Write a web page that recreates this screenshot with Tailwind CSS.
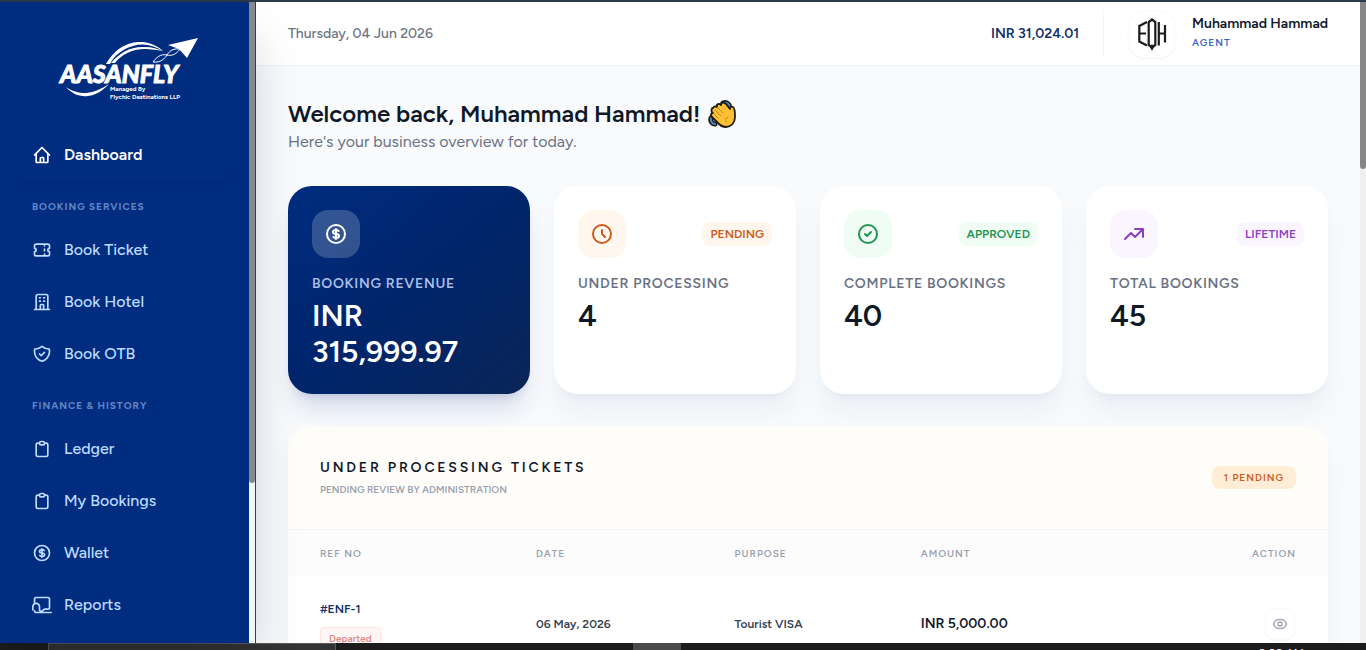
<!DOCTYPE html>
<html lang="en">
<head>
    <meta charset="UTF-8" />
    <meta name="viewport" content="width=device-width, initial-scale=1.0">
    <title>Aasanfly - Agent Dashboard</title>
    <script src="https://cdn.jsdelivr.net/npm/@tailwindcss/browser@4"></script>
</head>
<body class="flex h-screen flex-col overflow-hidden bg-[#f8fafc] font-['Figtree','Inter',sans-serif] antialiased">

    <div class="h-[2px] shrink-0 bg-[#2b3a4a]"></div>

    <div class="flex min-h-0 flex-1">

        <!-- Sidebar -->
        <aside class="relative z-10 flex w-64 shrink-0 overflow-hidden border-r border-[#1f3f80] bg-[#002d80] shadow-2xl">
            <div class="min-w-0 flex-1 overflow-hidden">
                <a href="#" class="mx-auto mt-8 mb-7 block w-[148px]" aria-label="Aasanfly home">
                    <svg viewBox="-8 0 148 69" class="block w-full" fill="#fff">
                        <path d="M47 30C57 12 72 7 84 8c9 1 16 5 20 9-10-6-20-8-30-5C63 15 55 22 51 30z" />
                        <path d="M52 29C60 19 72 12 86 13c7 0 13 2 18 4-6-1-12-2-18-2-13 0-24 6-30 14z" />
                        <path d="M139 4l-30 7 11 4 8 9z" />
                        <path d="M121 15c-8-1-11 3-13 6s-6 8-14 7c5-7 10-8 14-7s9 0 13-6z" fill="none" stroke="#fff" stroke-width="1" />
                        <path d="M7 53c6 7 14 10 22 9 9-1 15-6 21-12-8 5-14 8-23 9-8 0-14-2-20-6z" />
                        <text x="1" y="49" font-family="Lato, sans-serif" font-size="25" font-weight="900" font-style="italic" stroke="#fff" stroke-width="0.9">AASANFLY</text>
                        <text x="51" y="57" font-family="Figtree, sans-serif" font-size="6.25" font-weight="700">Managed By</text>
                        <text x="51" y="65" font-family="Figtree, sans-serif" font-size="6.25" font-weight="700">Flychic Destinations LLP</text>
                    </svg>
                </a>

                <nav class="px-4 text-base font-medium text-[#bfdbfe]">
                    <a href="#" class="flex h-12 items-center gap-3 rounded-xl px-4 font-semibold text-white shadow-lg shadow-[#001f5c]/10">
                        <svg class="size-5" viewBox="0 0 24 24" fill="none" stroke="currentColor" stroke-width="2" stroke-linecap="round" stroke-linejoin="round"><path d="M3 12l2-2m0 0l7-7 7 7M5 10v10a1 1 0 001 1h3m10-11l2 2m-2-2v10a1 1 0 01-1 1h-3m-6 0a1 1 0 001-1v-4a1 1 0 011-1h2a1 1 0 011 1v4a1 1 0 001 1m-6 0h6" /></svg>
                        Dashboard
                    </a>

                    <p class="px-4 pt-5 pb-3 text-[10px] leading-[15px] font-bold tracking-widest text-[#6486c8]">BOOKING SERVICES</p>
                    <div class="space-y-1">
                        <a href="#" class="flex h-12 items-center gap-3 px-4">
                            <svg class="size-5" viewBox="0 0 24 24" fill="none" stroke="currentColor" stroke-width="2" stroke-linecap="round" stroke-linejoin="round"><path d="M15 5v2m0 4v2m0 4v2M5 5a2 2 0 00-2 2v3a2 2 0 110 4v3a2 2 0 002 2h14a2 2 0 002-2v-3a2 2 0 110-4V7a2 2 0 00-2-2H5z" /></svg>
                            Book Ticket
                        </a>
                        <a href="#" class="flex h-12 items-center gap-3 px-4">
                            <svg class="size-5" viewBox="0 0 24 24" fill="none" stroke="currentColor" stroke-width="2" stroke-linecap="round" stroke-linejoin="round"><path d="M19 21V5a2 2 0 00-2-2H7a2 2 0 00-2 2v16m14 0h2m-2 0h-5m-9 0H3m2 0h5M9 7h1m-1 4h1m4-4h1m-1 4h1m-5 10v-5a1 1 0 011-1h2a1 1 0 011 1v5m-4 0h4" /></svg>
                            Book Hotel
                        </a>
                        <a href="#" class="flex h-12 items-center gap-3 px-4">
                            <svg class="size-5" viewBox="0 0 24 24" fill="none" stroke="currentColor" stroke-width="2" stroke-linecap="round" stroke-linejoin="round"><path d="M9 12l2 2 4-4m5.618-4.016A11.955 11.955 0 0112 2.944a11.955 11.955 0 01-8.618 3.04A12.02 12.02 0 003 9c0 5.591 3.824 10.29 9 11.622 5.176-1.332 9-6.03 9-11.622 0-1.042-.133-2.052-.382-3.016z" /></svg>
                            Book OTB
                        </a>
                    </div>

                    <p class="px-4 pt-5 pb-3 text-[10px] leading-[15px] font-bold tracking-widest text-[#6486c8]">FINANCE &amp; HISTORY</p>
                    <div class="space-y-1">
                        <a href="#" class="flex h-12 items-center gap-3 px-4">
                            <svg class="size-5" viewBox="0 0 24 24" fill="none" stroke="currentColor" stroke-width="2" stroke-linecap="round" stroke-linejoin="round"><path d="M9 5H7a2 2 0 00-2 2v12a2 2 0 002 2h10a2 2 0 002-2V7a2 2 0 00-2-2h-2M9 5a2 2 0 002 2h2a2 2 0 002-2M9 5a2 2 0 012-2h2a2 2 0 012 2" /></svg>
                            Ledger
                        </a>
                        <a href="#" class="flex h-12 items-center gap-3 px-4">
                            <svg class="size-5" viewBox="0 0 24 24" fill="none" stroke="currentColor" stroke-width="2" stroke-linecap="round" stroke-linejoin="round"><path d="M9 5H7a2 2 0 00-2 2v12a2 2 0 002 2h10a2 2 0 002-2V7a2 2 0 00-2-2h-2M9 5a2 2 0 002 2h2a2 2 0 002-2M9 5a2 2 0 012-2h2a2 2 0 012 2" /></svg>
                            My Bookings
                        </a>
                        <a href="#" class="flex h-12 items-center gap-3 px-4">
                            <svg class="size-5" viewBox="0 0 24 24" fill="none" stroke="currentColor" stroke-width="2" stroke-linecap="round" stroke-linejoin="round"><path d="M12 8c-1.657 0-3 .895-3 2s1.343 2 3 2 3 .895 3 2-1.343 2-3 2m0-8c1.11 0 2.08.402 2.599 1M12 8V7m0 1v8m0 0v1m0-1c-1.11 0-2.08-.402-2.599-1M21 12a9 9 0 11-18 0 9 9 0 0118 0z" /></svg>
                            Wallet
                        </a>
                        <a href="#" class="flex h-12 items-center gap-3 px-4">
                            <svg class="size-5 overflow-visible" viewBox="0 0 24 24" fill="none" stroke="currentColor" stroke-width="2" stroke-linecap="round" stroke-linejoin="round"><path d="M3 10V5a2 2 0 012-2h14a2 2 0 012 2v10a2 2 0 01-2 2h-4l-5 4H5a2 2 0 01-2-2M1 18v-4a4 4 0 018 0v3q0 3 3 3M4 21h19" /></svg>
                            Reports
                        </a>
                    </div>
                </nav>
            </div>
            <div class="w-[6px] shrink-0 bg-[#f1f5fb]">
                <div class="h-3/4 rounded-b-sm bg-[#86898e]"></div>
            </div>
        </aside>

        <!-- Main -->
        <div class="flex min-w-0 flex-1 flex-col overflow-hidden">
            <header class="flex h-16 shrink-0 items-center justify-between border-b border-gray-100 bg-white px-8">
                <p class="text-sm font-medium text-gray-500">Thursday, 04 Jun 2026</p>
                <div class="flex items-center">
                    <p class="pr-6 text-sm font-semibold text-[#0f2f66]">INR 31,024.01</p>
                    <div class="flex items-center gap-4 border-l border-gray-100 pl-6">
                        <div class="flex size-12 items-center justify-center rounded-2xl border border-gray-50 shadow-xs">
                            <svg class="h-[34px] w-[30px]" viewBox="0 0 30 34" fill="none" stroke="#1c1c1c" stroke-width="2.2">
                                <path d="M10 5L2.300 9v15.500l7.700 4M3 16.500h6" />
                                <path d="M15 2.500l3.300 2.500v23L15 30.500 11.700 28V5z" />
                                <path d="M15 34l-2-4 2-3 2 3z" fill="#1c1c1c" stroke="none" />
                                <path d="M21.800 5v23.500M28 8v17.500M22 16.500h6" />
                            </svg>
                        </div>
                        <div class="pb-0.5">
                            <p class="text-sm leading-5 font-semibold text-gray-900">Muhammad Hammad</p>
                            <p class="text-[10px] leading-[18px] font-semibold tracking-widest text-[#3b63c0]">AGENT</p>
                        </div>
                    </div>
                </div>
            </header>

            <main class="min-h-0 flex-1 overflow-hidden p-8">
                <div class="mb-8">
                    <h1 class="flex items-center gap-2 text-2xl font-semibold text-gray-900">
                        Welcome back, Muhammad Hammad!
                        <svg class="size-7" viewBox="0 0 28 28" stroke="#1b1b1b" stroke-width="1.8" stroke-linejoin="round" stroke-linecap="round">
                            <path d="M15 3c3-1 6 0 7 4M3 18c-1 3 1 6 4 6" fill="none" stroke-width="5" />
                            <path d="M15 3c3-1 6 0 7 4M3 18c-1 3 1 6 4 6" fill="none" stroke="#4f86ad" stroke-width="2" />
                            <path d="M5 8c1-2 3-2 4-1-1-3 2-4 4-2 0-3 3-3 5-1l4 5c0-2 1-3 3-2 2 1 2 5 2 10 0 6-4 10-9 10-3 0-5-1-7-3l-7-7c-2-2-1-4 1-4-3-2-1-5 0-5z" fill="#ffc033" />
                            <path d="M9 7l6 6M5 13l5 5M7 10l6 6M20 17c-2 1-3 3-2 5" fill="none" stroke="#b8741a" stroke-width="0.8" />
                        </svg>
                    </h1>
                    <p class="text-base text-gray-500">Here's your business overview for today.</p>
                </div>

                <div class="mb-8 grid grid-cols-4 gap-6">
                    <div class="rounded-3xl bg-linear-to-br from-[#002d80] via-[#00256b] to-[#0a2558] p-6 shadow-xl shadow-blue-900/15">
                        <div class="flex size-12 items-center justify-center rounded-2xl bg-white/20 text-white">
                            <svg class="size-6" viewBox="0 0 24 24" fill="none" stroke="currentColor" stroke-width="2" stroke-linecap="round" stroke-linejoin="round"><path d="M12 8c-1.657 0-3 .895-3 2s1.343 2 3 2 3 .895 3 2-1.343 2-3 2m0-8c1.11 0 2.08.402 2.599 1M12 8V7m0 1v8m0 0v1m0-1c-1.11 0-2.08-.402-2.599-1M21 12a9 9 0 11-18 0 9 9 0 0118 0z" /></svg>
                        </div>
                        <p class="mt-4 mb-1 text-sm font-semibold tracking-wider text-[#a9bfe8]">BOOKING REVENUE</p>
                        <p class="text-3xl font-semibold text-white">INR 315,999.97</p>
                    </div>
                    <div class="rounded-3xl bg-white p-6 shadow-xl shadow-slate-300/30">
                        <div class="flex items-center justify-between">
                            <div class="flex size-12 items-center justify-center rounded-2xl bg-orange-50 text-[#cb5a1c]">
                                <svg class="size-6" viewBox="0 0 24 24" fill="none" stroke="currentColor" stroke-width="2" stroke-linecap="round" stroke-linejoin="round"><path d="M12 8v4l3 3m6-3a9 9 0 11-18 0 9 9 0 0118 0z" /></svg>
                            </div>
                            <span class="rounded-lg bg-orange-50 px-2 py-1 text-xs font-semibold text-[#cb5a1c]">PENDING</span>
                        </div>
                        <p class="mt-4 mb-1 text-sm font-semibold tracking-wider text-gray-500">UNDER PROCESSING</p>
                        <p class="text-3xl font-semibold text-gray-900">4</p>
                    </div>
                    <div class="rounded-3xl bg-white p-6 shadow-xl shadow-slate-300/30">
                        <div class="flex items-center justify-between">
                            <div class="flex size-12 items-center justify-center rounded-2xl bg-green-50 text-[#22924f]">
                                <svg class="size-6" viewBox="0 0 24 24" fill="none" stroke="currentColor" stroke-width="2" stroke-linecap="round" stroke-linejoin="round"><path d="M9 12l2 2 4-4m6 2a9 9 0 11-18 0 9 9 0 0118 0z" /></svg>
                            </div>
                            <span class="rounded-lg bg-green-50 px-2 py-1 text-xs font-semibold text-[#22924f]">APPROVED</span>
                        </div>
                        <p class="mt-4 mb-1 text-sm font-semibold tracking-wider text-gray-500">COMPLETE BOOKINGS</p>
                        <p class="text-3xl font-semibold text-gray-900">40</p>
                    </div>
                    <div class="rounded-3xl bg-white p-6 shadow-xl shadow-slate-300/30">
                        <div class="flex items-center justify-between">
                            <div class="flex size-12 items-center justify-center rounded-2xl bg-purple-50 text-[#8a3fc0]">
                                <svg class="size-6" viewBox="0 0 24 24" fill="none" stroke="currentColor" stroke-width="2" stroke-linecap="round" stroke-linejoin="round"><path d="M13 7h8m0 0v8m0-8l-8 8-4-4-6 6" /></svg>
                            </div>
                            <span class="rounded-lg bg-purple-50 px-2 py-1 text-xs font-semibold text-[#8a3fc0]">LIFETIME</span>
                        </div>
                        <p class="mt-4 mb-1 text-sm font-semibold tracking-wider text-gray-500">TOTAL BOOKINGS</p>
                        <p class="text-3xl font-semibold text-gray-900">45</p>
                    </div>
                </div>

                <section class="overflow-hidden rounded-3xl bg-white shadow-xl shadow-slate-300/30">
                    <div class="flex items-center justify-between border-b border-gray-100 bg-[#fffdf9] p-8">
                        <div>
                            <h2 class="mb-1 text-sm font-semibold tracking-[0.2em] text-gray-900">UNDER PROCESSING TICKETS</h2>
                            <p class="text-[10px] leading-[15px] font-semibold text-gray-400">PENDING REVIEW BY ADMINISTRATION</p>
                        </div>
                        <span class="rounded-lg bg-[#ffedd5] px-3 py-1 text-[10px] leading-[15px] font-semibold tracking-widest text-[#cb5a1c]">1 PENDING</span>
                    </div>
                    <table class="w-full table-fixed text-left">
                        <thead class="bg-[#fcfcfd] text-[10px] leading-[15px] tracking-widest text-gray-400">
                            <tr>
                                <th class="w-[22.3%] py-4 pl-8 font-semibold">REF NO</th>
                                <th class="w-[19.1%] py-4 pl-4 font-semibold">DATE</th>
                                <th class="w-[17.9%] py-4 pl-4 font-semibold">PURPOSE</th>
                                <th class="py-4 pl-4 font-semibold">AMOUNT</th>
                                <th class="w-[18%] py-4 pr-8 text-right font-semibold">ACTION</th>
                            </tr>
                        </thead>
                        <tbody>
                            <tr class="text-xs font-semibold text-gray-700">
                                <td class="py-5 pl-8">
                                    <p class="mb-1.5 leading-6 text-[#0f2f66]">#ENF-1</p>
                                    <span class="inline-block rounded-sm border border-red-100 bg-[#fef6f6] px-2 py-[3px] text-[10px] leading-[15px] font-semibold text-[#dc8a8a]">Departed</span>
                                </td>
                                <td class="py-5 pl-4">06 May, 2026</td>
                                <td class="py-5 pl-4">Tourist VISA</td>
                                <td class="py-5 pl-4 text-sm text-gray-900">INR 5,000.00</td>
                                <td class="py-5 pr-8 text-right">
                                    <button class="inline-flex size-8 items-center justify-center rounded-xl border border-gray-50 align-middle text-gray-400 shadow-xs" aria-label="View ticket">
                                        <svg class="size-4" viewBox="0 0 24 24" fill="none" stroke="currentColor" stroke-width="2" stroke-linecap="round" stroke-linejoin="round"><path d="M15 12a3 3 0 11-6 0 3 3 0 016 0z" /><path d="M2.458 12C3.732 7.943 7.523 5 12 5c4.478 0 8.268 2.943 9.542 7-1.274 4.057-5.064 7-9.542 7-4.477 0-8.268-2.943-9.542-7z" /></svg>
                                    </button>
                                </td>
                            </tr>
                        </tbody>
                    </table>
                </section>
            </main>
        </div>
        <div class="w-[6px] shrink-0 bg-[#f0f0f0]">
            <div class="h-[26%] rounded-b-sm bg-[#868686]"></div>
        </div>
    </div>

    <!-- Taskbar -->
    <footer class="flex h-[7px] shrink-0 overflow-hidden bg-[#1c1c1c]">
        <div class="ml-12 w-[288px] border-x border-t border-[#5a5a5a] bg-[#333]"></div>
        <div class="ml-[297px] w-12 bg-[#4a4a4a]"></div>
        <span class="mr-[62px] ml-auto pt-1 text-xs leading-3 text-white">9:28 AM</span>
    </footer>
</body>
</html>
